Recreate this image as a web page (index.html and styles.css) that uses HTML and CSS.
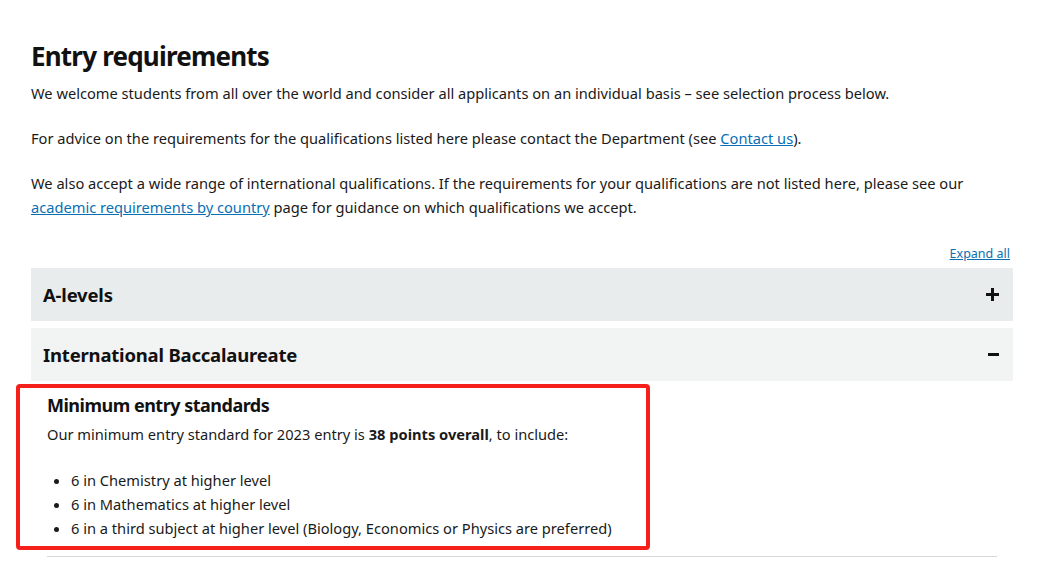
FILE: index.html
```html
<!DOCTYPE html>
<html lang="en">
<head>
<meta charset="utf-8">
<title>Entry requirements</title>
<link rel="stylesheet" href="styles.css">
</head>
<body>
<main class="page">
  <h1 class="title">Entry requirements</h1>
  <p class="para">We welcome students from all over the world and consider all applicants on an individual basis – see selection process below.</p>
  <p class="para">For advice on the requirements for the qualifications listed here please contact the Department (see <a class="link" href="#">Contact us</a>).</p>
  <p class="para">We also accept a wide range of international qualifications. If the requirements for your qualifications are not listed here, please see our <a class="link" href="#">academic requirements by country</a> page for guidance on which qualifications we accept.</p>
  <div class="expand-row"><a class="expand" href="#">Expand all</a></div>
  <section class="accordion">
    <div class="panel panel-closed">
      <h2 class="panel-title">A-levels</h2>
      <span class="icon plus"></span>
    </div>
    <div class="panel panel-open">
      <h2 class="panel-title">International Baccalaureate</h2>
      <span class="icon minus"></span>
    </div>
    <div class="panel-body">
      <h3 class="sub">Minimum entry standards</h3>
      <p class="para body-para">Our minimum entry standard for 2023 entry is <strong>38 points overall</strong>, to include:</p>
      <ul class="list">
        <li>6 in Chemistry at higher level</li>
        <li>6 in Mathematics at higher level</li>
        <li>6 in a third subject at higher level (Biology, Economics or Physics are preferred)</li>
      </ul>
      <div class="highlight"></div>
    </div>
  </section>
</main>
</body>
</html>
```
FILE: styles.css
```css
html, body {
  margin: 0;
  padding: 0;
  background: #ffffff;
}
body {
  font-family: "Noto Sans", "Open Sans", sans-serif;
  color: #1a1a1a;
  font-size: 14.65px;
}
.page {
  padding: 40px 44px 0 31px;
}
.title {
  margin: 0 0 8px 0;
  font-size: 26px;
  font-weight: 700;
  letter-spacing: -0.8px;
  line-height: 33px;
  color: #111;
}
.para {
  margin: 0 0 21px 0;
  line-height: 24px;
}
.link {
  color: #0a6fb3;
  text-decoration: underline;
}
.expand-row {
  display: flex;
  justify-content: flex-end;
  margin-top: 25px;
  padding-right: 3px;
  height: 20px;
  line-height: 20px;
}
.expand {
  color: #0a6fb3;
  font-size: 12.5px;
}
.accordion {
  margin-top: 4px;
  position: relative;
}
.panel {
  display: flex;
  align-items: center;
  justify-content: space-between;
  height: 53px;
  padding: 0 12px;
  margin-bottom: 7px;
}
.panel-closed { background: #e9ecec; }
.panel-open { background: #f2f3f3; margin-bottom: 0; }
.panel-title {
  margin: 0;
  font-size: 18.5px;
  font-weight: 700;
  letter-spacing: -0.2px;
  color: #111;
}
.icon {
  position: relative;
  width: 13px;
  height: 13px;
  margin-right: 2px;
}
.icon::before, .icon::after {
  content: "";
  position: absolute;
  background: #111;
}
.icon::before {
  left: 0; right: 0; top: 5px; height: 3px;
}
.plus::after {
  top: 0; bottom: 0; left: 5px; width: 3px;
}
.minus::after { display: none; }
.minus { width: 11px; }
.panel-body {
  position: relative;
  margin: 0 16px;
  padding: 12px 0 16px 0;
  border-bottom: 1px solid #d6d8d8;
}
.sub {
  margin: 0 0 5px 0;
  font-size: 18px;
  font-weight: 700;
  letter-spacing: -0.5px;
  line-height: 24px;
  color: #111;
}
.body-para { margin-bottom: 22px; }
.list {
  margin: 0;
  padding-left: 24px;
  line-height: 24px;
}
.highlight {
  position: absolute;
  left: -31px;
  top: 3px;
  width: 626px;
  height: 158px;
  border: 4px solid #f5201a;
  border-radius: 4px;
  pointer-events: none;
}
```
